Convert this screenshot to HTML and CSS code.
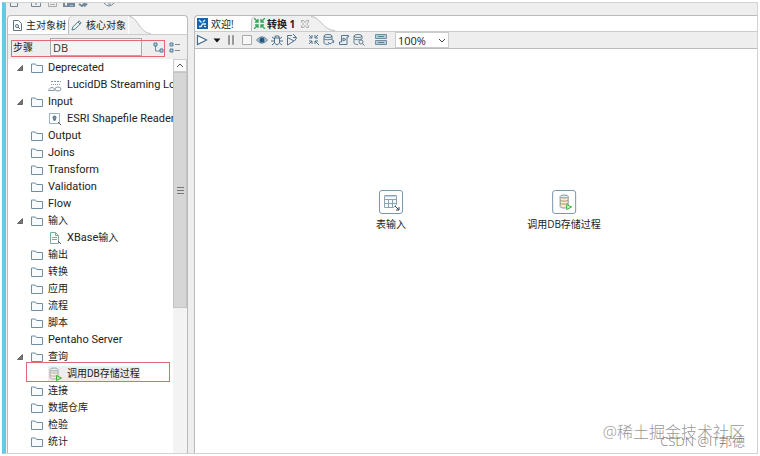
FILE: index.html
```html
<!DOCTYPE html>
<html lang="zh-CN">
<head>
<meta charset="utf-8">
<title>转换 1</title>
<link rel="stylesheet" href="styles.css">
</head>
<body>
<svg class="defs" aria-hidden="true">
  <symbol id="folder" viewBox="0 0 12 10"><path d="M.5 9.500V1h4l1 1.500h6v7z" fill="#f8fbfd" stroke="#6f8ea6"/></symbol>
  <symbol id="twist" viewBox="0 0 6 6"><path d="M5.500 .5v5h-5z" fill="#777" stroke="#444" stroke-width=".7"/></symbol>
  <symbol id="db" viewBox="0 0 14 14"><path d="M2 2.500v8c0 2 8 2 8 0v-8" fill="#f1ede2" stroke="#a3abae"/><ellipse cx="6" cy="2.500" rx="4" ry="1.500" fill="#e8eef0" stroke="#a3abae"/><path d="M2 5c0 1.500 8 1.500 8 0M2 8c0 1.500 8 1.500 8 0" fill="none" stroke="#b9b3a6"/><path d="M8.500 8.500l5 2.500-5 2.500z" fill="#b9f0b0" stroke="#35b83b"/></symbol>
</svg>
<div class="window">
  <header class="topbar">
    <svg width="120" height="4" viewBox="0 0 120 4" fill="none" stroke="#73889a"><path d="M2.500 0v3.500h7V0M23.500 0v3.500h9V0M28 2V0" /><path d="M40.500 0v3.500h8V0M42 1.500h5" stroke="#aaa"/><path d="M56 0v3.500h4V0M61 1h5v2.500h-5zM71 1l3 2 3-3M76 3.500l3-3" stroke-width="2"/><path d="M96 0q5 6 10 0M100 1h3"/></svg>
  </header>
  <div class="workspace">
    <aside class="sidebar">
      <nav class="tabs">
        <button class="tab"><svg width="9" height="11" viewBox="0 0 9 11" fill="none" stroke="#607482"><path d="M.5.500h5l3 3v7h-8z"/><circle cx="4" cy="6" r="1.500"/><path d="M5 7l2 2"/></svg>主对象树</button>
        <button class="tab tab-active"><svg width="11" height="11" viewBox="0 0 11 11" fill="none" stroke="#4f7f88"><path d="M1 10l.8-3L8 .8 10.200 3 4 9.200zM7 2l2 2"/></svg>核心对象</button>
        <svg class="curve" viewBox="0 0 24 20"><path d="M0 0C9 0 12 20 24 20H0z" fill="#f0f0f0"/><path d="M0 .5C9 .5 12 19.500 24 19.500" fill="none" stroke="#bbb"/></svg>
      </nav>
      <form class="search">
        <label for="step">步骤</label>
        <input id="step" type="text" value="DB">
        <button type="button" aria-label="展开"><svg width="11" height="11" viewBox="0 0 11 11"><path d="M2.500 4v5H7" fill="none" stroke="#789"/><path d="M1 1h3v3H1zM7 7h3v3H7z" fill="#b8cfdf" stroke="#547a95"/></svg></button>
        <button type="button" aria-label="折叠"><svg width="12" height="11" viewBox="0 0 12 11"><path d="M1 1h3v3H1zM1 7h3v3H1z" fill="#b8cfdf" stroke="#547a95"/><path d="M6 2.500h5M6 8.500h5" stroke="#888"/></svg></button>
        <span class="mark mark-search"></span>
      </form>
      <div class="tree-area">
        <ul class="tree">
          <li><button class="twist" aria-label="折叠"><svg><use href="#twist"/></svg></button><svg class="folder"><use href="#folder"/></svg>Deprecated</li>
          <li class="leaf"><svg class="icon" viewBox="0 0 14 14" fill="none" stroke="#8a99a4"><path d="M3 3.500h10" stroke-dasharray="2 1"/><path d="M3 6.500h9" stroke-dasharray="1 1"/><path d="M.5 12.500h6c0-2-1-3-2.500-3S.5 11 .5 12.500z"/><ellipse cx="10" cy="11" rx="3" ry="2"/></svg>LucidDB Streaming Loader</li>
          <li><button class="twist" aria-label="折叠"><svg><use href="#twist"/></svg></button><svg class="folder"><use href="#folder"/></svg>Input</li>
          <li class="leaf"><svg class="icon" viewBox="0 0 14 14" fill="none" stroke="#9cb0be"><path d="M1.500 1.500h10v10h-10z"/><path d="M6.500 9C4.500 6 4.500 4 6.500 4s2 2 0 5z" fill="#6c90a8" stroke="#4b7593"/><path d="M10 10l3 3" stroke="#555"/></svg>ESRI Shapefile Reader</li>
          <li><svg class="folder"><use href="#folder"/></svg>Output</li>
          <li><svg class="folder"><use href="#folder"/></svg>Joins</li>
          <li><svg class="folder"><use href="#folder"/></svg>Transform</li>
          <li><svg class="folder"><use href="#folder"/></svg>Validation</li>
          <li><svg class="folder"><use href="#folder"/></svg>Flow</li>
          <li><button class="twist" aria-label="折叠"><svg><use href="#twist"/></svg></button><svg class="folder"><use href="#folder"/></svg><span class="zh">输入</span></li>
          <li class="leaf"><svg class="icon" viewBox="0 0 14 14" fill="none" stroke="#7fae93"><path d="M2.500 1.500h5l3 3v8h-8zM7.500 1.500v3h3M4 6.500h5M4 8.500h5"/><path d="M10 10l3 3" stroke="#555"/></svg>XBase<span class="zh">输入</span></li>
          <li><svg class="folder"><use href="#folder"/></svg><span class="zh">输出</span></li>
          <li><svg class="folder"><use href="#folder"/></svg><span class="zh">转换</span></li>
          <li><svg class="folder"><use href="#folder"/></svg><span class="zh">应用</span></li>
          <li><svg class="folder"><use href="#folder"/></svg><span class="zh">流程</span></li>
          <li><svg class="folder"><use href="#folder"/></svg><span class="zh">脚本</span></li>
          <li><svg class="folder"><use href="#folder"/></svg>Pentaho Server</li>
          <li><button class="twist" aria-label="折叠"><svg><use href="#twist"/></svg></button><svg class="folder"><use href="#folder"/></svg><span class="zh">查询</span></li>
          <li class="leaf"><span class="selected"><svg class="icon"><use href="#db"/></svg><span class="zh">调用DB存储过程</span></span><span class="mark mark-row"></span></li>
          <li><svg class="folder"><use href="#folder"/></svg><span class="zh">连接</span></li>
          <li><svg class="folder"><use href="#folder"/></svg><span class="zh">数据仓库</span></li>
          <li><svg class="folder"><use href="#folder"/></svg><span class="zh">检验</span></li>
          <li><svg class="folder"><use href="#folder"/></svg><span class="zh">统计</span></li>
        </ul>
        <div class="scrollbar">
          <button class="scroll-up" aria-label="向上"><svg width="8" height="5" viewBox="0 0 8 5"><path d="M1 4l3-3 3 3" fill="none" stroke="#555"/></svg></button>
          <div class="thumb"><svg width="7" height="7" viewBox="0 0 7 7"><path d="M0 .5h7M0 3.500h7M0 6.500h7" stroke="#777"/></svg></div>
        </div>
      </div>
    </aside>
    <main class="editor">
      <nav class="tabs">
        <button class="tab tab-welcome"><svg width="11" height="11" viewBox="0 0 11 11"><path d="M0 0h11v11H0z" fill="#1764ad"/><path d="M2 2l2.500 2.500M2 8.500h2L5.500 6H9M6 4l2-2M7 8l2 1" fill="none" stroke="#e2f3ff" stroke-width="1.300"/></svg>欢迎!</button>
        <button class="tab tab-active tab-job"><svg width="11" height="11" viewBox="0 0 11 11" fill="none" stroke="#34a45b" stroke-width="1.300"><path d="M0 0l4 4M4 1v3H1M11 0L7 4M7 1v3h3M0 11l4-4M4 10V7H1M11 11L7 7M7 10V7h3"/></svg><b>转换 1</b><svg class="close" width="8" height="8" viewBox="0 0 8 8" fill="none" stroke="#aaa"><path d="M.5.500h2L4 2.500 5.500.500h2v1.500L5.500 4l2 2v1.500h-2L4 5.500 2.500 7.500h-2V6l2-2-2-2z"/></svg></button>
        <svg class="curve" viewBox="0 0 24 16" preserveAspectRatio="none"><path d="M0 0C9 0 12 16 24 16H0z" fill="#f0f0f0"/><path d="M0 .5C9 .5 12 15.500 24 15.500" fill="none" stroke="#bbb"/></svg>
      </nav>
      <div class="toolbar">
        <button aria-label="运行"><svg width="12" height="12" viewBox="0 0 12 12"><path d="M1.500 1.500l9 4.500-9 4.500z" fill="#fff" stroke="#426d8e" stroke-width="1.200"/></svg></button>
        <button aria-label="运行选项"><svg width="12" height="12" viewBox="0 0 12 12"><path d="M2.500 4.500h7L6 8.500z" fill="#111"/></svg></button>
        <button aria-label="暂停"><svg width="12" height="12" viewBox="0 0 12 12"><path d="M2.500 1.500h1v9h-1zM6.500 1.500h1v9h-1z" fill="#ddd" stroke="#999"/></svg></button>
        <button aria-label="停止"><svg width="12" height="12" viewBox="0 0 12 12"><path d="M1.500 1.500h9v9h-9z" fill="#f7f7f7" stroke="#aaa"/></svg></button>
        <button aria-label="预览"><svg width="12" height="12" viewBox="0 0 12 12"><path d="M.5 6Q6-.5 11.500 6 6 12.500.5 6z" fill="#b6cddd" stroke="#5c7e96"/><circle cx="6" cy="6" r="2.600" fill="#28597d"/></svg></button>
        <button aria-label="调试"><svg width="12" height="12" viewBox="0 0 12 12" fill="none" stroke="#4d738e"><path d="M3.500 4h5v5l-2.500 2L3.500 9zM4 4V2h4v2M3.500 5L1 3M8.500 5L11 3M3.500 7H0M8.500 7H12M3.500 9L1 11M8.500 9L11 11"/></svg></button>
        <button aria-label="重放"><svg width="12" height="12" viewBox="0 0 12 12" fill="none" stroke="#4d738e"><path d="M1.500 3.500L8 7l-6.500 4zM1.500 3V1.500H6M7 0l3.500 3.500H7M10.500 4l-2 3"/></svg></button>
        <span class="sep"></span>
        <button aria-label="校验"><svg width="12" height="12" viewBox="0 0 12 12" fill="none" stroke="#4d738e"><path d="M1 1l3 3M4 1v3H1M10 1L7 4M7 1v3h3M1 10l3-3M4 10V7H1M7 7l4 4M7 10V7h3"/></svg></button>
        <button aria-label="影响"><svg width="12" height="12" viewBox="0 0 12 12" fill="none" stroke="#547891"><path d="M1 2v7c0 1 3 2 5 1M9 2v4"/><ellipse cx="5" cy="2" rx="4" ry="1.500"/><path d="M1 5c2 1 5 1 8 0M5 8l2 2 4-3M9 6l2 1-1 2"/></svg></button>
        <button aria-label="SQL"><svg width="12" height="12" viewBox="0 0 12 12" fill="none" stroke="#547891"><path d="M3.500 8V1.500h7V3H9v7.500H1.500V8H3.500M5 4v3l3-1.500z"/></svg></button>
        <button aria-label="浏览数据库"><svg width="12" height="12" viewBox="0 0 12 12" fill="none" stroke="#627e91"><path d="M1 2v7c0 1 2 1.500 4 1.500M9 2v3M1 5c2 1 5 1 8 0"/><ellipse cx="5" cy="2" rx="4" ry="1.500"/><circle cx="8" cy="8" r="2"/><path d="M9.500 9.500l2 2"/></svg></button>
        <span class="sep"></span>
        <button aria-label="结果"><svg width="12" height="12" viewBox="0 0 12 12"><path d="M.5.500h11v4H.5zM.5 6.500h11v4H.5z" fill="#b4cad8" stroke="#71909f"/><path d="M3 2.500h6M3 8.500h6" stroke="#5f7f93"/></svg></button>
        <select class="zoom" aria-label="缩放"><option>100%</option></select>
      </div>
      <section class="canvas">
        <div class="node node-input"><span class="box"><svg width="18" height="18" viewBox="0 0 18 18" fill="none" stroke="#8da3b4"><path d="M2.500 2.500h12v9l-3 3h-9z" fill="#f4f9fc"/><path d="M2.500 6.500h12M2.500 10.500h12M6.500 6.500v8M10.500 6.500v8"/><path d="M2.500 3.500h12" stroke="#bed0dd"/><path d="M13 13l4 4M17 14v3h-3" stroke="#345"/></svg></span>表输入</div>
        <div class="node node-call"><span class="box"><svg width="18" height="18" viewBox="0 0 18 18"><path d="M5 3.500v10c0 2 8 2 8 0v-10" fill="#ffebc9" stroke="#83939c"/><ellipse cx="9" cy="3.500" rx="4" ry="1.500" fill="#e2edf1" stroke="#83939c"/><path d="M5 7c0 1.500 8 1.500 8 0M5 10c0 1.500 8 1.500 8 0" fill="none" stroke="#a88f76"/><path d="M11.500 11.500l5 2.500-5 2.500z" fill="#c2f7b9" stroke="#35bd3b"/></svg></span>调用DB存储过程</div>
      </section>
    </main>
  </div>
</div>
<p class="watermark">@稀土掘金技术社区</p>
<p class="watermark watermark-small">CSDN @IT邦德</p>
</body>
</html>
```
FILE: styles.css
```css
* { box-sizing: border-box; }
body {
  margin: 0;
  height: 100vh;
  padding: 2px;
  display: flex;
  flex-direction: column;
  background: #fff;
  color: #222;
  font: 11px/16px "Open Sans", "Noto Sans CJK SC", sans-serif;
  position: relative;
}
button { border: 0; padding: 0; margin: 0; background: none; font: inherit; color: inherit; }
svg { display: block; flex: none; }
.defs { position: absolute; width: 0; height: 0; }
.window {
  flex: 1;
  min-height: 0;
  display: flex;
  flex-direction: column;
  border: 1px solid #d2d2d2;
  border-left: 4px solid #64cae4;
  background: #eee;
}
.topbar { height: 12px; padding-left: 2px; }
.workspace { flex: 1; min-height: 0; display: flex; gap: 6px; padding-left: 1px; }
.sidebar {
  flex: 0 0 181px;
  min-width: 0;
  display: flex;
  flex-direction: column;
  border: 1px solid #bbb;
  border-bottom: 0;
  border-radius: 4px 4px 0 0;
}
.tabs { display: flex; flex: none; background: #fff; border-bottom: 1px solid #ccc; height: 20px; border-radius: 4px 4px 0 0; overflow: hidden; }
.sidebar .tabs { height: 19px; }
.editor .tabs { height: 16px; border-radius: 4px 0 0 0; }
.tab { display: flex; align-items: center; gap: 4px; padding: 0 2px 0 5px; font-size: 10px; white-space: nowrap; }
.tab-active { background: #f0f0f0; border-left: 1px solid #bbb; border-radius: 5px 0 0 0; padding-left: 2px; }
.curve { width: 24px; height: 100%; }
.search { position: relative; flex: none; display: flex; align-items: center; height: 24px; padding-left: 5px; font-size: 10px; }
.search label { width: 37px; }
.search input { width: 92px; height: 18px; margin-right: 11px; padding: 0 2px; border: 1px solid #aaa; background: #f5f5f5; font: inherit; font-size: 11px; color: #333; }
.search button { margin-right: 5px; }
.mark { position: absolute; border: 1px solid #e36a70; pointer-events: none; }
.mark-search { left: 3px; right: 22px; top: 5px; height: 17px; }
.mark-row { left: 18px; width: 144px; top: -3px; height: 20px; }
.tree-area { flex: 1; min-height: 0; display: flex; background: #fff; }
.tree { flex: 1; min-width: 0; margin: 0; padding: 0; list-style: none; overflow: hidden; font-family: Roboto, "Noto Sans CJK SC", sans-serif; }
.tree li { position: relative; display: flex; align-items: center; gap: 5px; height: 17px; padding-left: 23px; white-space: nowrap; }
.tree .leaf { padding-left: 40px; }
.twist { width: 6px; margin: 0 3px 0 -14px; }
.twist svg { width: 6px; height: 6px; }
.folder { width: 12px; height: 10px; }
.icon { width: 14px; height: 14px; }
.zh { font-size: 10px; }
.leaf .zh { margin-left: -5px; }
.leaf .selected .zh { margin-left: 0; }
.selected { display: flex; align-items: center; gap: 5px; background: #eee; }
.scrollbar { flex: none; width: 14px; display: flex; flex-direction: column; background: #f3f3f3; }
.scroll-up { height: 13px; display: flex; align-items: center; justify-content: center; border: 1px solid #ccc; background: #fafafa; }
.thumb { height: 60%; display: flex; align-items: center; justify-content: center; background: #d6d6d6; border: 1px solid #c4c4c4; }
.editor { flex: 1; min-width: 0; display: flex; flex-direction: column; border: 1px solid #bbb; border-right: 0; border-bottom: 0; border-radius: 4px 0 0 0; }
.tab-welcome { width: 56px; padding-left: 2px; gap: 3px; }
.tab-job { gap: 2px; }
.close { margin-left: 4px; }
.toolbar { flex: none; display: flex; align-items: center; gap: 3px; height: 17px; padding-left: 1px; border-bottom: 1px solid #bbb; background: #eee; }
.sep { width: 4px; }
.zoom { width: 54px; height: 16px; margin-left: 5px; padding: 0 2px; appearance: none; border: 1px solid #ccc; border-radius: 0; font: inherit; color: #222;
  background: #fff url("data:image/svg+xml,%3Csvg xmlns='http://www.w3.org/2000/svg' width='8' height='5'%3E%3Cpath d='M1 1l3 3 3-3' fill='none' stroke='%23444'/%3E%3C/svg%3E") no-repeat right 2px center; }
.canvas { position: relative; flex: 1; background: #fff; }
.node { position: absolute; top: 141px; display: flex; flex-direction: column; align-items: center; gap: 2px; transform: translateX(-50%); font-size: 10px; white-space: nowrap; }
.node-input { left: 196px; }
.node-call { left: 369px; }
.box { width: 24px; height: 24px; display: flex; align-items: center; justify-content: center; border: 1px solid #7898b0; border-radius: 3px; background: #fff; }
.watermark { position: absolute; right: 15px; bottom: 12px; margin: 0; font-size: 16px; line-height: 24px; color: #999; font-weight: 300; }
.watermark-small { bottom: 3px; font-size: 13px; color: #777; }
```
